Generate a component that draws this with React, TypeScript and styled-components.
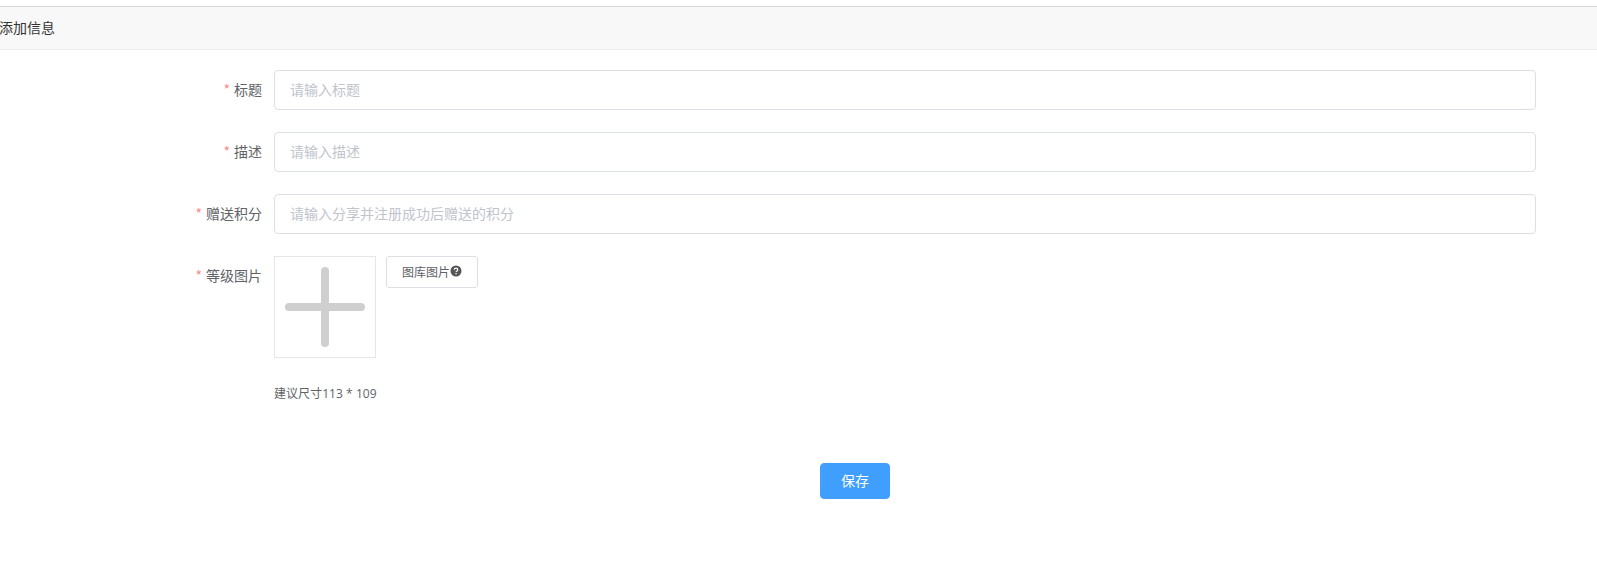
import { FC } from 'react';
import styled, { createGlobalStyle } from 'styled-components';

const GlobalStyle = createGlobalStyle`
  html, body {
    margin: 0;
    padding: 0;
    background: #fff;
    overflow: hidden;
    font-family: "Noto Sans CJK SC", "Liberation Sans", sans-serif;
  }
  input::placeholder {
    color: #c0c4cc;
  }
`;

const Page = styled.div`
  width: 1597px;
  height: 565px;
  padding-top: 6px;
  box-sizing: border-box;
  overflow: hidden;
`;

const PanelHeader = styled.div`
  height: 44px;
  box-sizing: border-box;
  display: flex;
  align-items: center;
  padding-bottom: 2px;
  background: #f8f8f8;
  border-top: 1px solid #d4d4d4;
  border-bottom: 1px solid #eeeeee;
  font-size: 14px;
  color: #333;
  text-indent: -1px;
`;

const Form = styled.form`
  display: flex;
  flex-direction: column;
  gap: 22px;
  padding: 20px 61px 0 0;
`;

const Row = styled.div`
  display: flex;
  align-items: flex-start;
`;

const Label = styled.label`
  width: 274px;
  flex: none;
  padding-right: 12px;
  box-sizing: border-box;
  text-align: right;
  font-size: 14px;
  line-height: 38px;
  color: #606266;

  &::before {
    content: '*';
    color: #f78989;
    margin-right: 4px;
  }
`;

const TextInput = styled.input`
  flex: 1;
  height: 40px;
  box-sizing: border-box;
  padding: 0 15px 2px;
  border: 1px solid #dcdfe6;
  border-radius: 4px;
  outline: none;
  font: inherit;
  font-size: 14px;
  color: #606266;
`;

const Field = styled.div`
  display: flex;
  flex-direction: column;
`;

const UploadRow = styled.div`
  display: flex;
  align-items: flex-start;
  gap: 10px;
`;

const UploadBox = styled.div`
  width: 102px;
  height: 102px;
  box-sizing: border-box;
  border: 1px solid #e5e5ea;
  display: flex;
  align-items: center;
  justify-content: center;
`;

const LibraryButton = styled.button`
  width: 92px;
  height: 32px;
  box-sizing: border-box;
  padding: 0 0 2px;
  display: flex;
  align-items: center;
  justify-content: center;
  background: #fff;
  border: 1px solid #dcdfe6;
  border-radius: 3px;
  font: inherit;
  font-size: 12px;
  color: #606266;
`;

const Hint = styled.div`
  margin-top: 26px;
  font-family: "Open Sans", "Noto Sans CJK SC", sans-serif;
  font-size: 12px;
  letter-spacing: 0.05px;
  line-height: 20px;
  color: #606266;
`;

const Actions = styled.div`
  display: flex;
  justify-content: center;
  margin-top: 59px;
  padding-left: 332px;
  width: 1378px;
  box-sizing: border-box;
`;

const SaveButton = styled.button`
  width: 70px;
  height: 36px;
  padding: 0 0 2px;
  background: #409eff;
  border: 1px solid #409eff;
  border-radius: 4px;
  color: #fff;
  font: inherit;
  font-size: 14px;
`;

const PlusIcon: FC = () => (
  <svg width="80" height="80" viewBox="0 0 80 80" aria-hidden="true">
    <rect x="36" y="0" width="8" height="80" rx="4" fill="#cfcfcf" />
    <rect x="0" y="36" width="80" height="8" rx="4" fill="#cfcfcf" />
  </svg>
);

const HelpIcon: FC = () => (
  <svg width="12" height="12" viewBox="0 0 12 12" aria-hidden="true">
    <circle cx="6" cy="6" r="5.5" fill="#555" />
    <path
      d="M4.2 4.7C4.3 3.7 5 3.2 6 3.2c1 0 1.8.6 1.8 1.5 0 .7-.4 1.1-1 1.4-.5.3-.7.5-.7 1"
      fill="none"
      stroke="#fff"
      strokeWidth="1.2"
    />
    <rect x="5.4" y="8" width="1.3" height="1.3" fill="#fff" />
  </svg>
);

const fields = [
  { label: '标题', placeholder: '请输入标题' },
  { label: '描述', placeholder: '请输入描述' },
  { label: '赠送积分', placeholder: '请输入分享并注册成功后赠送的积分' },
];

const App: FC = () => (
  <Page>
    <GlobalStyle />
    <PanelHeader>添加信息</PanelHeader>
    <Form>
      {fields.map((v) => (
        <Row key={v.label}>
          <Label>{v.label}</Label>
          <TextInput placeholder={v.placeholder} />
        </Row>
      ))}
      <Row>
        <Label>等级图片</Label>
        <Field>
          <UploadRow>
            <UploadBox>
              <PlusIcon />
            </UploadBox>
            <LibraryButton type="button">
              图库图片
              <HelpIcon />
            </LibraryButton>
          </UploadRow>
          <Hint>建议尺寸113 * 109</Hint>
        </Field>
      </Row>
    </Form>
    <Actions>
      <SaveButton type="button">保存</SaveButton>
    </Actions>
  </Page>
);

export default App;
